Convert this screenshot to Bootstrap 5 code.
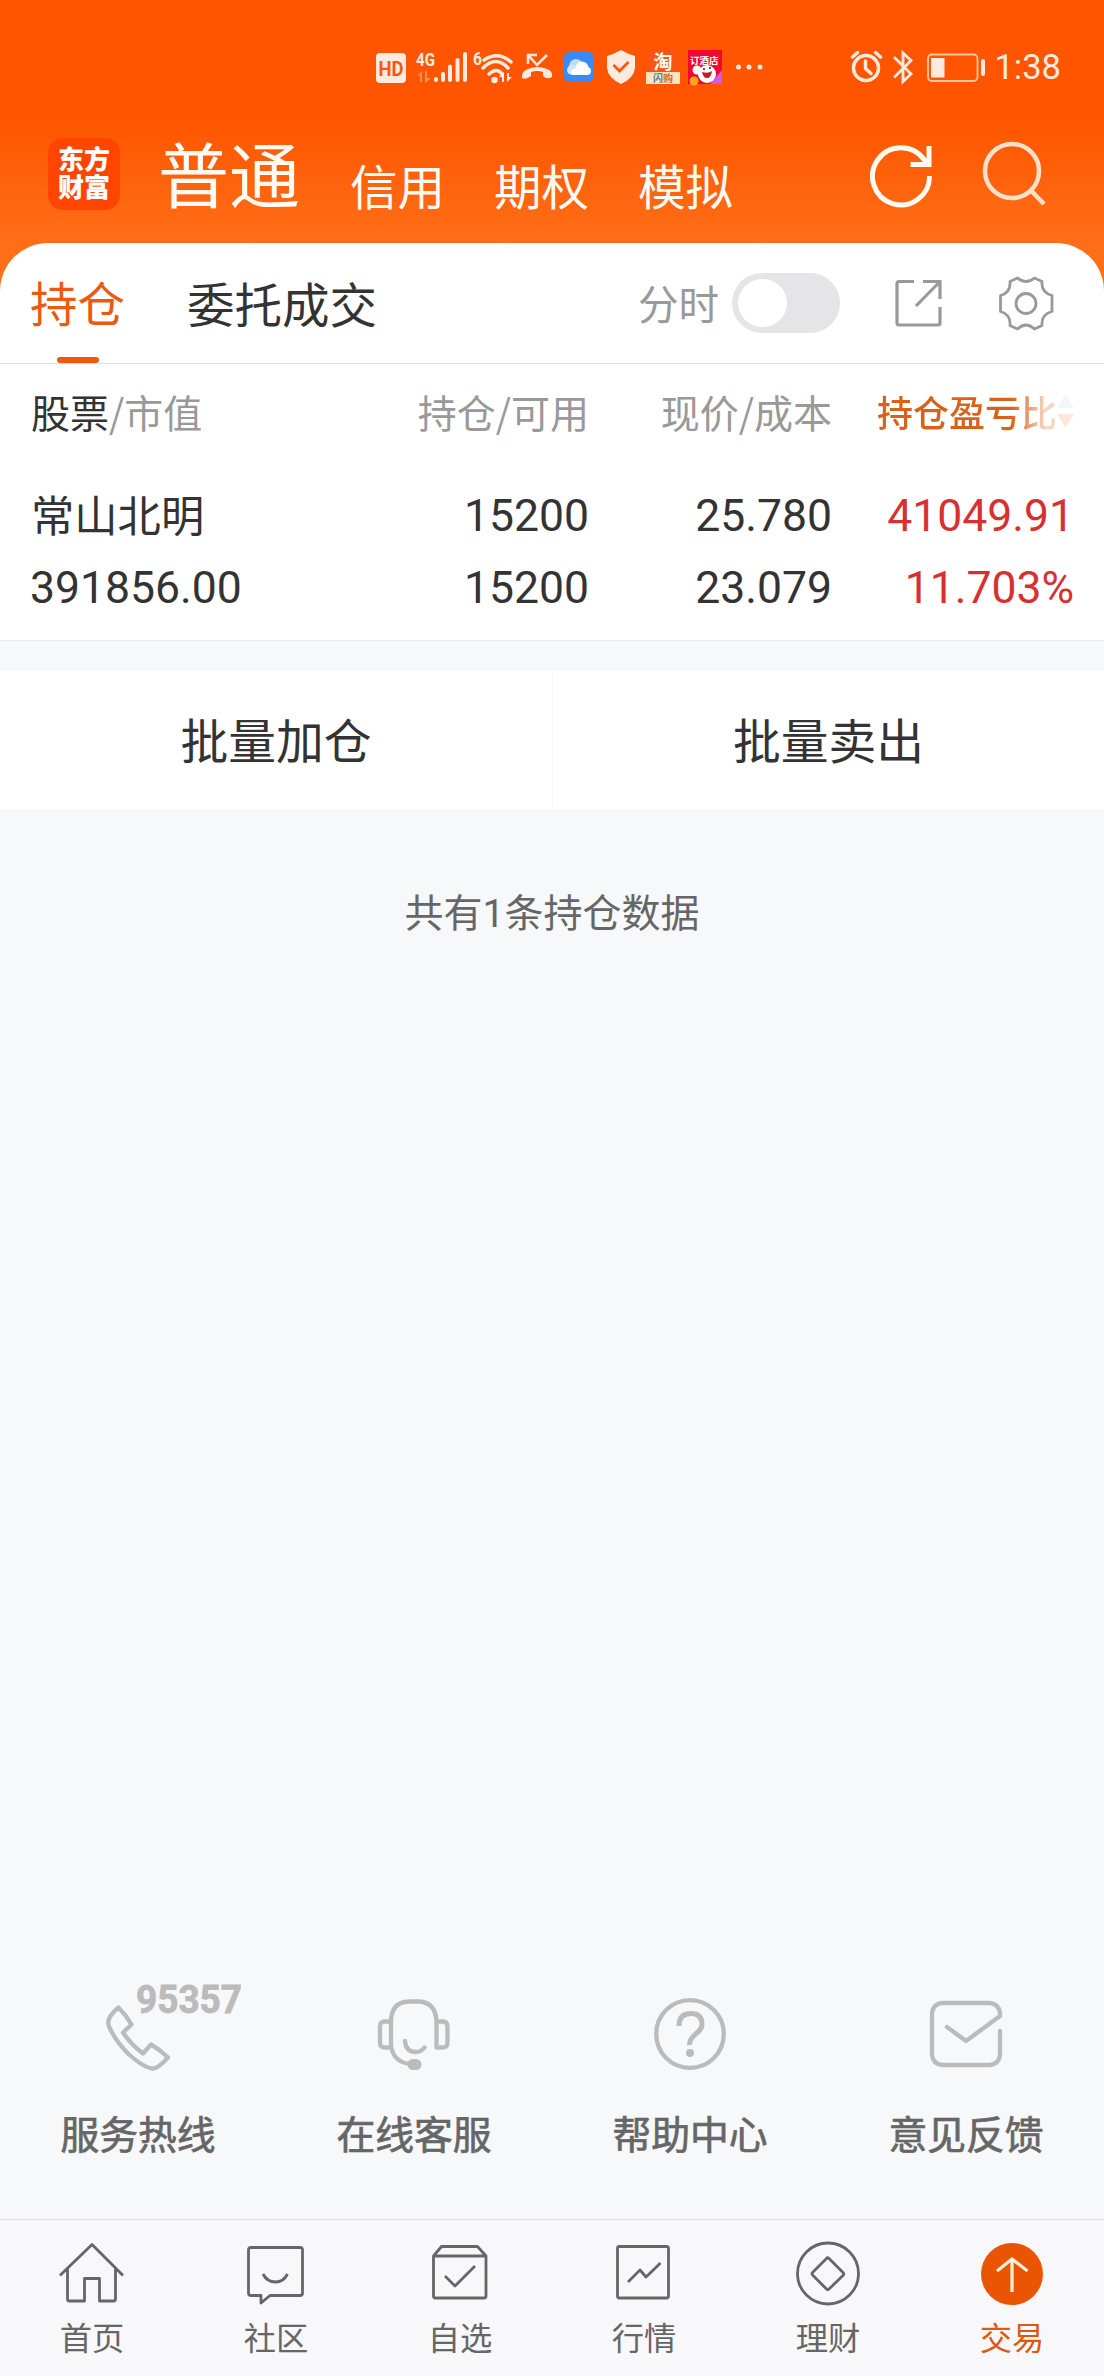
<!DOCTYPE html>
<html lang="zh-CN">
<head>
<meta charset="utf-8">
<meta name="viewport" content="width=device-width, initial-scale=1">
<title>持仓</title>
<link href="https://cdn.jsdelivr.net/npm/bootstrap@5.3.0/dist/css/bootstrap.min.css" rel="stylesheet">
<script src="https://cdn.jsdelivr.net/npm/bootstrap@5.3.0/dist/js/bootstrap.bundle.min.js"></script>
<style>
  body{font-family:Roboto,"Noto Sans CJK SC",sans-serif;background:#f7f8fa;color:#333;width:1104px;height:2376px;overflow:hidden;line-height:1}
  svg{display:block;flex:none}
  .app{height:2376px}
  .cjk{font-family:"Noto Sans CJK SC",sans-serif}
  .top-area{height:291px;background:linear-gradient(#ff5500 0,#ff5500 118px,#ff6e17 240px,#ff7018 100%)}
  .status-bar{height:135px;padding:48px 43px 0 374px}
  .clock{font-size:34.5px;line-height:38px;color:#ffeadf;margin-left:7px}
  .head-row{height:108px;padding:3px 56px 0 48px}
  .logo{width:72px;height:72px;border-radius:15px;background:#ff4500;color:#fff;font-weight:900;font-size:26px;line-height:28px;padding-top:6px}
  .acct{color:#fffaf2;font-size:47.5px;line-height:60px;gap:49px;height:77px;margin-left:38px}
  .acct .main{font-size:71px;line-height:72px;margin-right:1px;padding-bottom:8px}
  .sheet{background:#fff;border-radius:48px 48px 0 0;margin-top:-48px;height:397px}
  .tabs-row{height:121px;border-bottom:1px solid #dfe1e2;font-size:47.5px;padding-left:30px}
  .tab-on{color:#ea5a10;position:relative;height:120px;line-height:117px}
  .tab-on::after{content:"";position:absolute;left:27px;bottom:0;width:42px;height:6px;border-radius:3px;background:#f0580e}
  .tab-off{line-height:114px;margin-left:62px}
  .fs{font-size:40.5px;line-height:114px;color:#999;margin-left:auto}
  .toggle{width:108px;height:60px;border-radius:30px;background:#e5e5e8;padding:6px;margin:0 54px 0 13px}
  .knob{width:49px;height:48px;border-radius:50%;background:#fff}
  .hold{display:grid;grid-template-columns:248px 310px 243px 242px;padding-left:31px;text-align:right}
  .hold>:first-child{text-align:left}
  .h-head{font-size:39px;line-height:94px;height:116px;color:#999}
  .num{font-size:44.5px;line-height:72px}
  .num>:first-child{margin-left:-1px}
  .num>.stock{font-size:43.3px;line-height:66px;margin-left:0}
  .rise{color:#d8302f}
  .sortcol{font-size:36px;background:linear-gradient(90deg,#d9611a 0,#d9611a 74%,#f8d5c2 94%);-webkit-background-clip:text;background-clip:text;color:transparent;font-weight:500}
  .gap-band{height:31px;border-top:1px solid #e9eaec}
  .batch{height:138px;background:#fff;font-size:47.8px;line-height:136px;text-align:center}
  .batch>div+div{border-left:1px solid #f3f4f6}
  .note{font-size:39px;line-height:44px;color:#666;margin-top:83px}
  .svc{margin-top:auto;height:240px;color:#666;font-size:38.8px;text-align:center}
  .svc .lbl{line-height:50px;margin-top:32px;-webkit-text-stroke:.7px #666}
  .bottom{height:157px;border-top:1px solid #dfe1e4;background:#f8f8fa;color:#666;font-size:32.3px;text-align:center}
  .bottom .lbl{line-height:40px;margin-top:2px}
  .ln{fill:none;stroke:#bbb;stroke-width:4.3;stroke-linecap:round;stroke-linejoin:round}
  .nv{fill:none;stroke:#666;stroke-width:2.8;stroke-linejoin:round}
</style>
</head>
<body>
<div class="app d-flex flex-column">
  <header class="top-area">
    <div class="status-bar d-flex">
      <svg width="392" height="40" viewBox="374 48 392 40" font-family="Roboto,sans-serif" fill="#ffeadf">
        <rect x="376" y="53" width="30" height="30" rx="4"/>
        <text x="378.500" y="75.500" font-size="20" font-weight="700" textLength="25" lengthAdjust="spacingAndGlyphs" fill="#f75808">HD</text>
        <text x="416" y="66" font-size="19" font-weight="700" textLength="19" lengthAdjust="spacingAndGlyphs">4G</text>
        <g stroke="#ffeadf" stroke-width="4" stroke-linecap="round"><path d="M436 79v1M443 74v6M450 66.500v13.500M457.500 60v20M465 54v26"/></g>
        <g opacity=".4"><path d="M417 76l5-5v11h-2v-7zM425 71h2v7h4l-6 5z"/></g>
        <text x="473" y="65" font-size="18" font-weight="700" textLength="9" lengthAdjust="spacingAndGlyphs">6</text>
        <g fill="none" stroke="#ffeadf" stroke-width="3.500" stroke-linecap="round"><path d="M484 60q14-9.500 27 2M483 68q13-13 25 0M489 74q8-7 13 0"/></g>
        <circle cx="494.500" cy="80" r="3.200"/><path d="M499 77l5-5v10h-2v-5zM507 73h2v4h3l-5 5z"/>
        <g fill="none" stroke="#ffeadf" stroke-width="2.500"><path d="M529 56l8 9 10-10M528 64v-9h9"/></g>
        <path d="M522 76q0-5 6-7 9-4 19 0 6 2 5 8-5 3-9-1v-4q-6-2-12 0v4q-5 4-9 2z"/>
        <rect x="564" y="52" width="30" height="30" rx="6" fill="#388bf4"/>
        <circle cx="576" cy="66" r="7" fill="#b9dcff"/><circle cx="572" cy="70" r="5" fill="#cfe6ff"/><circle cx="582" cy="68" r="6.500" fill="#fff"/><circle cx="587" cy="71" r="4" fill="#fff"/><rect x="571" y="69" width="17" height="6" rx="3" fill="#fff"/>
        <path d="M621 50q7 4 14 6v12q-1 10-14 16-13-6-14-16V56q7-2 14-6z"/><path d="M613.500 65l6 6 9-9" fill="none" stroke="#f75808" stroke-width="2.800"/>
        <rect x="646" y="50" width="34" height="34" fill="#fb5410"/><rect x="646" y="72" width="34" height="12" fill="#ffe3bd"/>
        <g font-family="Noto Sans CJK SC,sans-serif" font-weight="700"><text x="653.500" y="69" font-size="19" fill="#fff">淘</text><text x="653" y="82" font-size="10" fill="#d4672e"><tspan fill="#577ba8">闪</tspan>购</text></g>
        <rect x="688" y="50" width="34" height="34" fill="#f3062f"/>
        <path d="M710 84l12-14v14z" fill="#cf5ce0"/><circle cx="697" cy="70" r="4.500" fill="#fff"/><circle cx="707" cy="74" r="9" fill="#fff"/><path d="M702 72q6 2 10-1-1 8-6 7-3-1-4-6z" fill="#c21b2c"/><circle cx="704" cy="69" r="1" fill="#222"/><circle cx="710" cy="68" r="1" fill="#222"/><circle cx="694" cy="81" r="4.500" fill="#f9a51c"/>
        <text x="690" y="64" font-size="9.500" font-family="Noto Sans CJK SC,sans-serif" font-weight="700" fill="#fff">订酒店</text>
        <circle cx="738.500" cy="67" r="2.500"/><circle cx="749" cy="67" r="2.500"/><circle cx="760" cy="67" r="2.500"/>
      </svg>
      <svg class="ms-auto" width="138" height="40" viewBox="850 48 138 40" fill="none" stroke="#ffeadf">
        <circle cx="867" cy="68" r="12.500" stroke-width="3.500"/><path d="M866.500 61v7.500l5.500 5M853.500 57l5-4.500M881.500 57l-5-4.500" stroke-width="3.500" stroke-linecap="round"/>
        <path d="M895 57l17 17-8 7.500V53l8 7.500-17 17" stroke-width="2.800"/>
        <rect x="929" y="54.500" width="49.500" height="26.500" rx="4" stroke-width="1.800" stroke="#ffc8a0"/><rect x="932" y="58" width="13.500" height="19.500" fill="#ffeadf" stroke="none"/><path d="M984 61v13" stroke-width="4" stroke-linecap="round"/>
      </svg>
      <div class="clock">1:38</div>
    </div>
    <div class="head-row d-flex">
      <div class="logo cjk text-center">东方<br>财富</div>
      <nav class="acct cjk d-flex align-items-end me-auto">
        <span class="main">普通</span><span>信用</span><span>期权</span><span>模拟</span>
      </nav>
      <svg width="180" height="72" viewBox="867 139 180 72" fill="none">
        <path d="M928.500 177A28.500 28.500 0 1 1 923 160.500L928 166" stroke="#fffaf0" stroke-width="5"/><path d="M928 147v18.500h-18.500" stroke="#fffaf0" stroke-width="5"/>
        <circle cx="1011" cy="172" r="27" stroke="#ffe1cb" stroke-width="4.500"/><path d="M1029.500 191l13.500 14" stroke="#ffe1cb" stroke-width="4.500"/>
      </svg>
    </div>
  </header>

  <main class="sheet">
    <div class="tabs-row cjk d-flex align-items-center">
      <div class="tab-on">持仓</div><div class="tab-off">委托成交</div>
      <div class="fs">分时</div><div class="toggle"><div class="knob"></div></div>
      <svg width="210" height="60" viewBox="894 273 210 60" fill="none" stroke="#999">
        <path d="M914 281.500H899q-2 0-2 2V323q0 2 2 2h39q2 0 2-2v-16M923 281.500h17V299M916 306l23.500-24" stroke-width="3.200"/>
        <g stroke-width="2.800" stroke-linejoin="round"><circle cx="1026" cy="303.500" r="10"/><path d="M1010 281.500l7.500-3.500q8.500 7 17 0l7.500 3.500q-1 11 10 14v16q-11 3-10 14l-7.500 3.500q-8.500-8-17 0l-7.500-3.500q1-11-9.500-14v-16q10.500-3 9.500-14z"/></g>
      </svg>
    </div>
    <div class="hold h-head cjk">
      <div><span style="color:#333">股票</span>/市值</div><div>持仓/可用</div><div>现价/成本</div>
      <div class="d-flex justify-content-end align-items-center" style="height:94px"><span class="sortcol">持仓盈亏比</span>
        <svg width="17" height="36" viewBox="0 0 17 36"><path d="M0 15L8.500 1 17 15z" fill="#f6f6f7"/><path d="M0 21h17L8.500 35z" fill="#fde6dc"/></svg></div>
    </div>
    <div class="hold num"><div class="stock cjk">常山北明</div><div>15200</div><div>25.780</div><div class="rise">41049.91</div></div>
    <div class="hold num"><div>391856.00</div><div>15200</div><div>23.079</div><div class="rise">11.703%</div></div>
  </main>
  <div class="gap-band"></div>
  <div class="batch cjk d-flex"><div class="w-50">批量加仓</div><div class="w-50">批量卖出</div></div>
  <div class="note text-center">共有1条持仓数据</div>

  <section class="svc cjk row g-0">
    <div class="col-3">
      <svg class="mx-auto" width="276" height="96" viewBox="0 1980 276 96">
        <path class="ln" d="M118.500 2008.500q8 8 13 17l-8.500 8q8 12 20 21l8-9q9 5 17 13-10 11-15 11-8 0-24-14-13-13-19-26-6-9 8.500-21z"/>
        <text x="136" y="2014" font-family="Roboto,sans-serif" font-weight="700" font-size="38" fill="#bbb" stroke="#bbb" stroke-width=".8" textLength="106" lengthAdjust="spacingAndGlyphs">95357</text>
      </svg><div class="lbl">服务热线</div></div>
    <div class="col-3">
      <svg class="mx-auto" width="276" height="96" viewBox="276 1980 276 96">
        <path class="ln" d="M391 2022.500h-6q-5 0-5 5v16q0 5 5 5h6M391 2048v-25q0-20 18-20.500h10q17 1 17.500 20.500v25.500h6q5 0 5-5v-16q0-5-5-5h-5M391 2047q3 17 20 18M405 2042q1 11 11 11 5 0 8.500-4.500"/><rect x="407.500" y="2060" width="14" height="11" rx="5.500" fill="#bbb"/>
      </svg><div class="lbl">在线客服</div></div>
    <div class="col-3">
      <svg class="mx-auto" width="276" height="96" viewBox="552 1980 276 96">
        <circle class="ln" cx="690" cy="2035" r="33.800"/><path class="ln" style="stroke-width:5;stroke-linecap:butt" d="M679 2027q0-12.500 12-12.500 11 0 11 11 0 4-4 7.500-9 7-8.500 13"/><circle cx="690" cy="2054" r="4" fill="#bbb"/>
      </svg><div class="lbl">帮助中心</div></div>
    <div class="col-3">
      <svg class="mx-auto" width="276" height="96" viewBox="828 1980 276 96">
        <path class="ln" d="M947 2028l19 14 34-25v-3q-1-9-10-10h-48q-9 1-10 10v42q1 9 10 10h48q9-1 10-10v-24"/>
      </svg><div class="lbl">意见反馈</div></div>
  </section>

  <nav class="bottom cjk row row-cols-6 g-0">
    <div class="col"><svg class="mx-auto" width="80" height="94" viewBox="52 2220 80 94"><path class="nv" d="M60 2275.500l32-31 31 31M67.500 2269v30q0 2 2 2h15v-22.500h15v22.500h14q2 0 2-2v-30"/></svg><div class="lbl">首页</div></div>
    <div class="col"><svg class="mx-auto" width="80" height="94" viewBox="236 2220 80 94"><path class="nv" d="M251 2247.500h49q2.500 0 2.500 2.500v43q0 2.500-2.500 2.500h-30l-9 7.500v-7.500h-10q-2.500 0-2.500-2.500v-43q0-2.500 2.500-2.500zM263 2274q4 8 12.500 8 8 0 12-8"/></svg><div class="lbl">社区</div></div>
    <div class="col"><svg class="mx-auto" width="80" height="94" viewBox="420 2220 80 94"><path class="nv" d="M433.500 2256l8-9.500h36l8.500 9.500v40q0 2-2 2h-48.500q-2 0-2-2zM433.500 2256H486M445 2276l10 10 20-20"/></svg><div class="lbl">自选</div></div>
    <div class="col"><svg class="mx-auto" width="80" height="94" viewBox="604 2220 80 94"><rect class="nv" x="617.500" y="2246.500" width="51" height="51.500" rx="2"/><path class="nv" d="M628 2282l12-12 6 7 14.500-14"/></svg><div class="lbl">行情</div></div>
    <div class="col"><svg class="mx-auto" width="80" height="94" viewBox="788 2220 80 94"><circle class="nv" cx="828" cy="2273.500" r="30.500"/><path class="nv" d="M826.500 2258.500q1-1.500 2.500 0l14 14q1.500 1.500 0 3l-14 13.500q-1.500 1.500-2.500 0l-14-14q-1-1.500 0-2.500z"/></svg><div class="lbl">理财</div></div>
    <div class="col" style="color:#df5810"><svg class="mx-auto" width="80" height="94" viewBox="972 2220 80 94"><circle cx="1012" cy="2274" r="31" fill="#ea5504"/><path d="M1012 2292v-32M997 2271l15-12 15.500 12" fill="none" stroke="#fff0dc" stroke-width="3.200"/></svg><div class="lbl">交易</div></div>
  </nav>
</div>
</body>
</html>
